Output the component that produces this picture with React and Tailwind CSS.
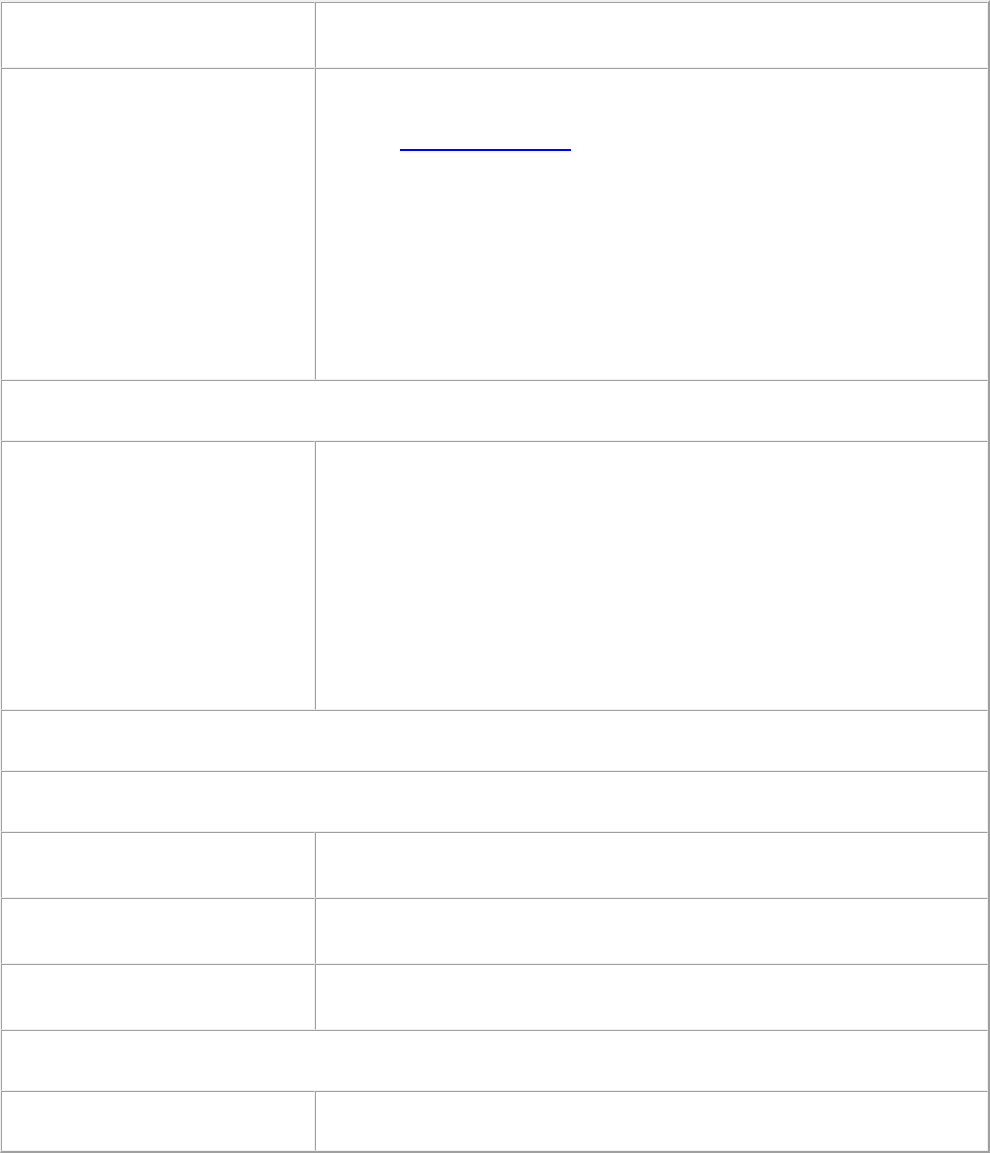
import React from 'react';

const rows = [
    { h: 'h-[66px]', split: true },
    { h: 'h-[312px]', split: true, link: true },
    { h: 'h-[61px]' },
    { h: 'h-[269px]', split: true },
    { h: 'h-[61px]' },
    { h: 'h-[61px]' },
    { h: 'h-[66px]', split: true },
    { h: 'h-[66px]', split: true },
    { h: 'h-[66px]', split: true },
    { h: 'h-[61px]' },
    { h: 'h-[60px]', split: true },
];

// inset cell border: dark top/left, light bottom/right
const cell = 'box-border border border-[#a0a0a0] border-b-[#f0f0f0] border-r-[#f0f0f0] bg-white';

const App = () => {
    return (
        <div className="bg-white w-[990px] h-[1153px] font-['Liberation_Serif',serif]">
            <div className="box-border w-[990px] grid grid-cols-[314px_673px] border-t-2 border-l border-r-2 border-b-2 border-t-[#f0f0f0] border-l-[#f0f0f0] border-r-[#a0a0a0] border-b-[#a0a0a0]">
                {rows.map((row, i) =>
                    row.split ? (
                        <React.Fragment key={i}>
                            <div className={`${cell} ${row.h}`} />
                            <div className={`${cell} ${row.h}`}>
                                {row.link && (
                                    <a href="#" className="block ml-[84px] mt-[80px] w-[171px] h-[2px] bg-[#0000ff]" />
                                )}
                            </div>
                        </React.Fragment>
                    ) : (
                        <div key={i} className={`${cell} ${row.h} col-span-2`} />
                    )
                )}
            </div>
        </div>
    );
};

export default App;
